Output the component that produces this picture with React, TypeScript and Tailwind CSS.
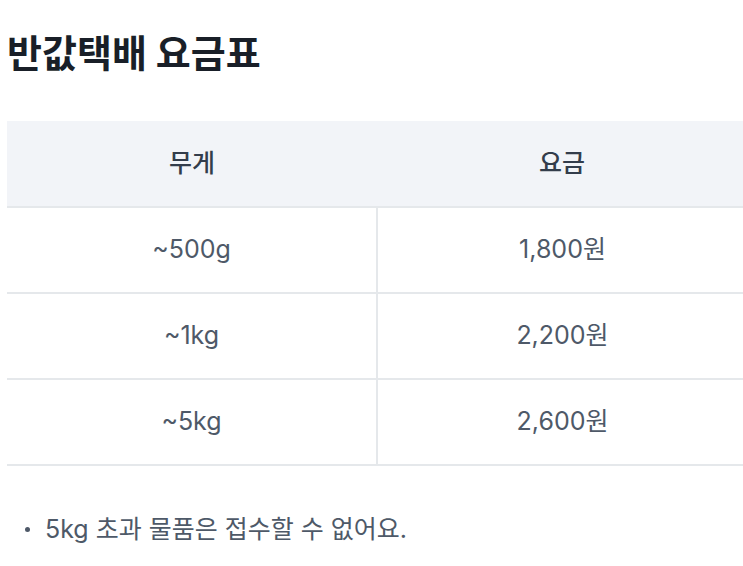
const rows = [
  { weight: '~500g', price: '1,800원' },
  { weight: '~1kg', price: '2,200원' },
  { weight: '~5kg', price: '2,600원' },
]

export default function App() {
  return (
    <div
      className="h-[566px] w-[743px] overflow-hidden bg-white"
      style={{ fontFamily: 'Inter, "Noto Sans CJK KR", sans-serif' }}
    >
      <h1 className="pl-[7px] pt-[25px] text-[38px] font-bold leading-[56px] text-[#191f28]">
        반값택배 요금표
      </h1>

      <table className="ml-[7px] mt-[40px] w-[740px] table-fixed border-collapse text-[25px]">
        <thead>
          <tr className="h-[86px] border-b-2 border-[#e5e8eb] bg-[#f2f4f8]">
            <th className="font-medium text-[#333d4b]">무게</th>
            <th className="font-medium text-[#333d4b]">요금</th>
          </tr>
        </thead>
        <tbody>
          {rows.map((r) => (
            <tr key={r.weight} className="h-[86px] border-b-2 border-[#e5e8eb]">
              <td className="border-r-2 border-[#e5e8eb] text-center text-[#4e5968]">{r.weight}</td>
              <td className="text-center text-[#4e5968]">{r.price}</td>
            </tr>
          ))}
        </tbody>
      </table>

      <ul className="mt-[45px] pl-[25px] text-[25px] leading-[36px] text-[#4e5968]">
        <li className="flex items-center gap-[15px]">
          <span className="h-[5px] w-[5px] rounded-full bg-[#4e5968]" />
          <span>5kg 초과 물품은 접수할 수 없어요.</span>
        </li>
      </ul>
    </div>
  )
}
